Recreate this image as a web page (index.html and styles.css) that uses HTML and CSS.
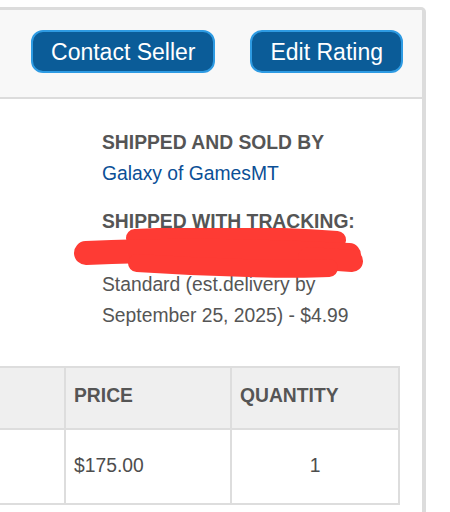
FILE: index.html
```html
<!DOCTYPE html>
<html lang="en">
<head>
<meta charset="utf-8">
<title>Order details</title>
<link rel="stylesheet" href="styles.css">
</head>
<body>
<div class="card">
  <div class="card-header">
    <button class="btn" type="button">Contact Seller</button>
    <button class="btn" type="button">Edit Rating</button>
  </div>
  <div class="info">
    <div class="label">SHIPPED AND SOLD BY</div>
    <div class="seller">Galaxy of GamesMT</div>
    <div class="label label-gap">SHIPPED WITH TRACKING:</div>
    <div class="tracking" aria-label="redacted tracking number">
      <svg class="redact" width="292" height="50" viewBox="0 0 292 50" xmlns="http://www.w3.org/2000/svg">
        <g stroke="#fe3b34" stroke-linecap="round" stroke-linejoin="round" fill="none">
          <path d="M62 10 C 140 6, 210 8, 264 12" stroke-width="18"/>
          <path d="M13 25 C 100 21, 200 23, 276 27" stroke-width="24"/>
          <path d="M236 30 L 279 33" stroke-width="22"/>
          <path d="M64 35 C 140 40, 220 42, 256 40" stroke-width="18"/>
        </g>
      </svg>
    </div>
    <div class="text">Standard (est.delivery by</div>
    <div class="text">September 25, 2025) - $4.99</div>
  </div>
  <table class="items">
    <colgroup>
      <col class="c1"><col class="c2"><col class="c3">
    </colgroup>
    <thead>
      <tr><th></th><th>PRICE</th><th>QUANTITY</th></tr>
    </thead>
    <tbody>
      <tr><td></td><td>$175.00</td><td class="qty">1</td></tr>
    </tbody>
  </table>
</div>
</body>
</html>
```
FILE: styles.css
```css
* { box-sizing: border-box; }

html, body {
  margin: 0;
  padding: 0;
  background: #ffffff;
  overflow: hidden;
}

body {
  font-family: "Liberation Sans", Arial, sans-serif;
  color: #555555;
}

.card {
  margin: 7px 0 0 -60px;
  width: 486px;
  border-top: 3px solid #dcdcdc;
  border-right: 4px solid #dcdcdc;
  border-left: 3px solid #dcdcdc;
  border-top-right-radius: 5px;
  background: #ffffff;
  padding-bottom: 40px;
}

.card-header {
  height: 89px;
  background: #f8f8f8;
  border-bottom: 2px solid #dcdcdc;
  border-top-right-radius: 2px;
  display: flex;
  justify-content: flex-end;
  align-items: flex-start;
  gap: 35px;
  padding: 20px 19px 0 0;
}

.btn {
  height: 43px;
  padding: 0 18px;
  border: 2px solid #2e9be3;
  border-radius: 12px;
  background: #0b5c98;
  color: #ffffff;
  font-family: "Liberation Sans", Arial, sans-serif;
  font-size: 23px;
  line-height: 40px;
  margin: 0;
}

.info {
  padding: 27.5px 0 0 159px;
  font-size: 19.3px;
  line-height: 31.5px;
}

.label {
  font-weight: bold;
  color: #555555;
}

.label-gap {
  margin-top: 16px;
}

.seller {
  color: #0b4f96;
}

.tracking {
  position: relative;
  height: 31.5px;
}

.redact {
  position: absolute;
  left: -29px;
  top: -9px;
}

.text {
  color: #555555;
}

.items {
  margin: 34px 0 0 17px;
  width: 438px;
  table-layout: fixed;
  border-collapse: collapse;
  font-size: 19.3px;
  line-height: 31.5px;
}

.c1 { width: 104px; }
.c2 { width: 166px; }
.c3 { width: 168px; }

.items th,
.items td {
  border: 2px solid #dddddd;
  text-align: left;
  vertical-align: top;
}

.items th {
  height: 62px;
  padding: 12px 8px 0;
  background: #efefef;
  font-weight: bold;
  color: #555555;
}

.items td {
  height: 75px;
  padding: 20.5px 8px 0;
  color: #4d4d4d;
  background: #ffffff;
}

.items td.qty {
  text-align: center;
}
```
